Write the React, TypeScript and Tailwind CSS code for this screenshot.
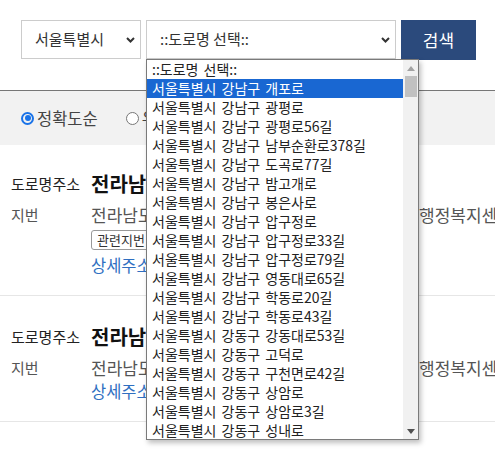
import React from "react";

const items = [
  "::도로명 선택::",
  "서울특별시 강남구 개포로",
  "서울특별시 강남구 광평로",
  "서울특별시 강남구 광평로56길",
  "서울특별시 강남구 남부순환로378길",
  "서울특별시 강남구 도곡로77길",
  "서울특별시 강남구 밤고개로",
  "서울특별시 강남구 봉은사로",
  "서울특별시 강남구 압구정로",
  "서울특별시 강남구 압구정로33길",
  "서울특별시 강남구 압구정로79길",
  "서울특별시 강남구 영동대로65길",
  "서울특별시 강남구 학동로20길",
  "서울특별시 강남구 학동로43길",
  "서울특별시 강동구 강동대로53길",
  "서울특별시 강동구 고덕로",
  "서울특별시 강동구 구천면로42길",
  "서울특별시 강동구 상암로",
  "서울특별시 강동구 상암로3길",
  "서울특별시 강동구 성내로",
];

function Chevron() {
  return (
    <svg width="9" height="6" viewBox="0 0 9 6">
      <path d="M1 1 L4.5 4.5 L8 1" stroke="#333" strokeWidth="2" fill="none" />
    </svg>
  );
}

function Result({ related, top }: { related: boolean; top: string }) {
  return (
    <div className={"border-b border-[#e6e6e6] pl-[11px] pb-[19px] " + top}>
      <div className="flex items-center h-[28px]">
        <span className="w-[80px] shrink-0 text-[15px] text-[#222]">도로명주소</span>
        <span className="text-[20px] font-bold text-[#111] whitespace-nowrap">전라남도 목포시 용당로 123</span>
      </div>
      <div className="flex mt-[5px]">
        <span className="w-[80px] shrink-0 text-[15px] text-[#555] leading-[24px]">지번</span>
        <div className="flex flex-col">
          <div className="flex items-center h-[24px] text-[17px] text-[#555] whitespace-nowrap">
            <span className="w-[328px] shrink-0 overflow-hidden">전라남도 목포시 용해동 123-4</span>
            <span className="shrink-0">행정복지센터</span>
          </div>
          {related && (
            <div className="mt-[3px] flex">
              <span className="inline-flex items-center h-[20px] px-[5px] border border-[#999] rounded-[3px] text-[13px] text-[#333]">
                관련지번
              </span>
            </div>
          )}
          <div className={"text-[16.5px] text-[#2f6fc1] leading-[22px] " + (related ? "mt-[4px]" : "mt-0")}>
            상세주소 보기
          </div>
        </div>
      </div>
    </div>
  );
}

export default function App() {
  return (
    <div
      className="relative w-[495px] h-[451px] overflow-hidden bg-white"
      style={{ fontFamily: '"Noto Sans CJK KR", "Noto Sans", sans-serif' }}
    >
      <div className="h-[91px] border-b border-[#777] pt-[20px] pl-[21px] flex items-start gap-[5px]">
        <div className="w-[120px] h-[39px] border border-[#ccc] flex items-center justify-between pl-[13px] pr-[5px] text-[15px] text-[#333]">
          <span>서울특별시</span>
          <Chevron />
        </div>
        <div className="w-[250px] h-[39px] border border-[#ccc] flex items-center justify-between pl-[13px] pr-[5px] text-[15px] text-[#333]">
          <span>::도로명 선택::</span>
          <Chevron />
        </div>
        <div className="w-[75px] h-[40px] bg-[#2b4a7c] text-white text-[17px] flex items-center justify-center">
          검색
        </div>
      </div>
      <div className="h-[54px] bg-[#f2f2f2] flex items-center pl-[21px] text-[16.5px] text-[#444]">
        <span className="w-[13px] h-[13px] shrink-0 rounded-full border-[2px] border-[#1a73e8] flex items-center justify-center">
          <span className="w-[6px] h-[6px] rounded-full bg-[#1a73e8]" />
        </span>
        <span className="ml-[3px]">정확도순</span>
        <span className="ml-[28px] w-[13px] h-[13px] shrink-0 rounded-full border border-[#777] bg-white" />
        <span className="ml-[3px]">우편번호순</span>
      </div>
      <Result related={true} top="pt-[25px]" />
      <Result related={false} top="pt-[27px]" />

      <div className="absolute left-[146px] top-[59px] w-[273px] h-[381px] border border-[#7a7a7a] bg-white shadow-[2px_3px_5px_rgba(0,0,0,0.25)] flex">
        <div className="flex-1 flex flex-col">
          {items.map((t, i) => (
            <div
              key={i}
              className={
                i === 1
                  ? "h-[19px] pl-[5px] flex items-center text-[14px] [word-spacing:2px] whitespace-nowrap bg-[#1967d2] text-white"
                  : "h-[19px] pl-[5px] flex items-center text-[14px] [word-spacing:2px] whitespace-nowrap text-[#222]"
              }
            >
              {t}
            </div>
          ))}
        </div>
        <div className="w-[15px] bg-[#f1f1f1] flex flex-col items-center">
          <div className="h-[16px] flex items-center justify-center">
            <svg width="8" height="5" viewBox="0 0 8 5">
              <path d="M0 5 L4 0 L8 5 Z" fill="#a3a3a3" />
            </svg>
          </div>
          <div className="w-[12px] h-[21px] bg-[#c1c1c1]" />
          <div className="flex-1" />
          <div className="h-[16px] flex items-center justify-center">
            <svg width="8" height="5" viewBox="0 0 8 5">
              <path d="M0 0 L4 5 L8 0 Z" fill="#505050" />
            </svg>
          </div>
        </div>
      </div>
    </div>
  );
}
